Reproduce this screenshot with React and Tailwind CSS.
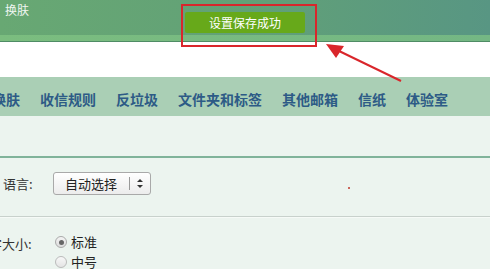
import React from "react";

const navItems = ["换肤", "收信规则", "反垃圾", "文件夹和标签", "其他邮箱", "信纸", "体验室"];

const App = () => {
  return (
    <div
      className="relative w-[490px] h-[269px] overflow-hidden bg-[#ecf4ef]"
      style={{ fontFamily: '"Noto Sans CJK SC", "Noto Sans", sans-serif' }}
    >
      {/* top header */}
      <div className="h-[35px] bg-gradient-to-r from-[#68a873] via-[#62a177] to-[#589683]">
        <div className="pl-[5px] pt-[1px] text-[12px] text-white/90">换肤</div>
      </div>
      <div className="h-[7px] bg-gradient-to-r from-[#7bbd7f] to-[#74b784] border-b border-[#4f8c65]" />

      {/* white strip */}
      <div className="h-[35px] bg-white" />

      {/* nav */}
      <div className="h-[39px] bg-[#aacfb5] flex items-center gap-[20px] -ml-[8px] pt-[5px]">
        {navItems.map((item) => (
          <span key={item} className="text-[14px] font-bold text-[#2d5b86] whitespace-nowrap">
            {item}
          </span>
        ))}
      </div>

      {/* light area */}
      <div className="h-[40px]" />
      <div className="h-[2px] bg-[#80b39a]" />

      {/* language row */}
      <div className="h-[58px] flex items-start pt-[14px]">
        <span className="w-[53px] pl-[3px] pt-[2px] text-[13px] text-[#333]">语言:</span>
        <div className="w-[98px] h-[23px] rounded-[3px] border border-[#a9a9a9] bg-gradient-to-b from-white to-[#ececec] flex items-center text-[13px] text-[#222]">
          <span className="pl-[11px] w-[75px]">自动选择</span>
          <span className="h-[13px] border-l border-[#999]" />
          <svg className="ml-[7px]" width="6" height="9" viewBox="0 0 6 9">
            <polygon points="3,0 6,3 0,3" fill="#333" />
            <polygon points="0,6 6,6 3,9" fill="#333" />
          </svg>
        </div>
        <span className="ml-[197px] mt-[15px] w-[2px] h-[2px] bg-[#c0392b] rounded-full" />
      </div>
      <div className="h-px bg-[#c8d1cc]" />
      <div className="h-px bg-[#f6faf7]" />

      {/* font size */}
      <div className="flex pt-[16px]">
        <span className="w-[55px] -ml-[11px] shrink-0 text-[13px] text-[#333] whitespace-nowrap">字大小:</span>
        <div className="flex flex-col gap-[4px] text-[13px] text-[#222] ml-[11px]">
          <label className="flex items-center gap-[4px] h-[16px]">
            <span className="w-[12px] h-[12px] rounded-full border border-[#aaa] bg-gradient-to-b from-[#f4f4f4] to-[#dcdcdc] flex items-center justify-center">
              <span className="w-[5px] h-[5px] rounded-full bg-[#666]" />
            </span>
            标准
          </label>
          <label className="flex items-center gap-[4px] h-[16px]">
            <span className="w-[12px] h-[12px] rounded-full border border-[#bbb] bg-gradient-to-b from-[#f8f8f8] to-[#e4e4e4]" />
            中号
          </label>
        </div>
      </div>

      {/* toast */}
      <div className="absolute left-[185px] top-[12px] w-[120px] h-[21px] bg-[#67a91a] rounded-[2px] flex items-center justify-center text-[12px] text-white">
        设置保存成功
      </div>

      {/* annotation box */}
      <div className="absolute left-[181px] top-[4px] w-[136px] h-[43px] border-2 border-[#d9262b]" />

      {/* annotation arrow */}
      <svg className="absolute left-0 top-0" width="490" height="269">
        <line x1="401" y1="81" x2="337" y2="50" stroke="#d9262b" strokeWidth="2" />
        <polygon points="326,44 344,46 336,58" fill="#d9262b" />
      </svg>
    </div>
  );
};

export default App;
